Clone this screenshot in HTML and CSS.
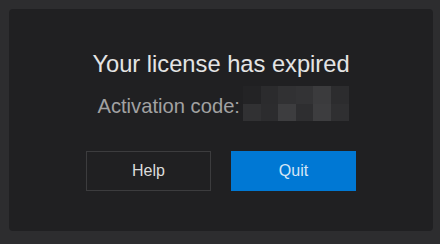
FILE: index.html
```html
<!DOCTYPE html>
<html>
<head>
<meta charset="utf-8">
<link rel="stylesheet" href="styles.css">
</head>
<body>
<div class="card">
  <div class="title">Your license has expired</div>
  <div class="code-row">
    <span class="code-label">Activation code:</span>
    <span class="mosaic">
      <i class="c1"></i><i class="c2"></i><i class="c3"></i><i class="c4"></i><i class="c5"></i><i class="c6"></i>
      <i class="d1"></i><i class="d2"></i><i class="d3"></i><i class="d4"></i><i class="d5"></i><i class="d6"></i>
    </span>
  </div>
  <div class="buttons">
    <button class="btn btn-help">Help</button>
    <button class="btn btn-quit">Quit</button>
  </div>
</div>
</body>
</html>
```
FILE: styles.css
```css
html, body {
  margin: 0;
  padding: 0;
  background: #2d2d2f;
  width: 440px;
  height: 244px;
  overflow: hidden;
}
body {
  padding: 9px 7px 0 9px;
  box-sizing: border-box;
  font-family: "Liberation Sans", Arial, sans-serif;
}
.card {
  height: 222px;
  background: #202022;
  border-radius: 4px;
  display: flex;
  flex-direction: column;
  align-items: center;
  padding-top: 40px;
  box-sizing: border-box;
}
.title {
  color: #e4e4e4;
  font-size: 23.7px;
  line-height: 28px;
  padding-top: 1px;
}
.code-row {
  display: flex;
  align-items: center;
  margin-top: 8px;
  margin-left: 4px;
}
.code-label {
  color: #a2a2a2;
  font-size: 20.2px;
  line-height: 24px;
  margin-top: 4px;
}
.mosaic {
  display: grid;
  grid-template-columns: repeat(6, 17.6px);
  grid-template-rows: 17.5px 17.5px;
  margin-left: 3px;
}
.mosaic i { display: block; }
.c1 { background: #232325; }
.c2 { background: #2b2b2d; }
.c3 { background: #313133; }
.c4 { background: #333335; }
.c5 { background: #3b3b3d; }
.c6 { background: #2c2c2e; }
.d1 { background: #313133; }
.d2 { background: #2c2c2e; }
.d3 { background: #3d3d3f; }
.d4 { background: #2e2e30; }
.d5 { background: #3d3d3f; }
.d6 { background: #2f2f31; }
.buttons {
  display: flex;
  gap: 20px;
  margin-top: 30px;
}
.btn {
  width: 125px;
  height: 40px;
  font-family: "Liberation Sans", Arial, sans-serif;
  font-size: 16px;
  color: #dcdcdc;
  border-radius: 0;
  padding: 0;
}
.btn-help {
  background: #202022;
  border: 1px solid #3c3c3e;
}
.btn-quit {
  background: #0078d4;
  border: 1px solid #0078d4;
  color: #d6e6f6;
}
```
